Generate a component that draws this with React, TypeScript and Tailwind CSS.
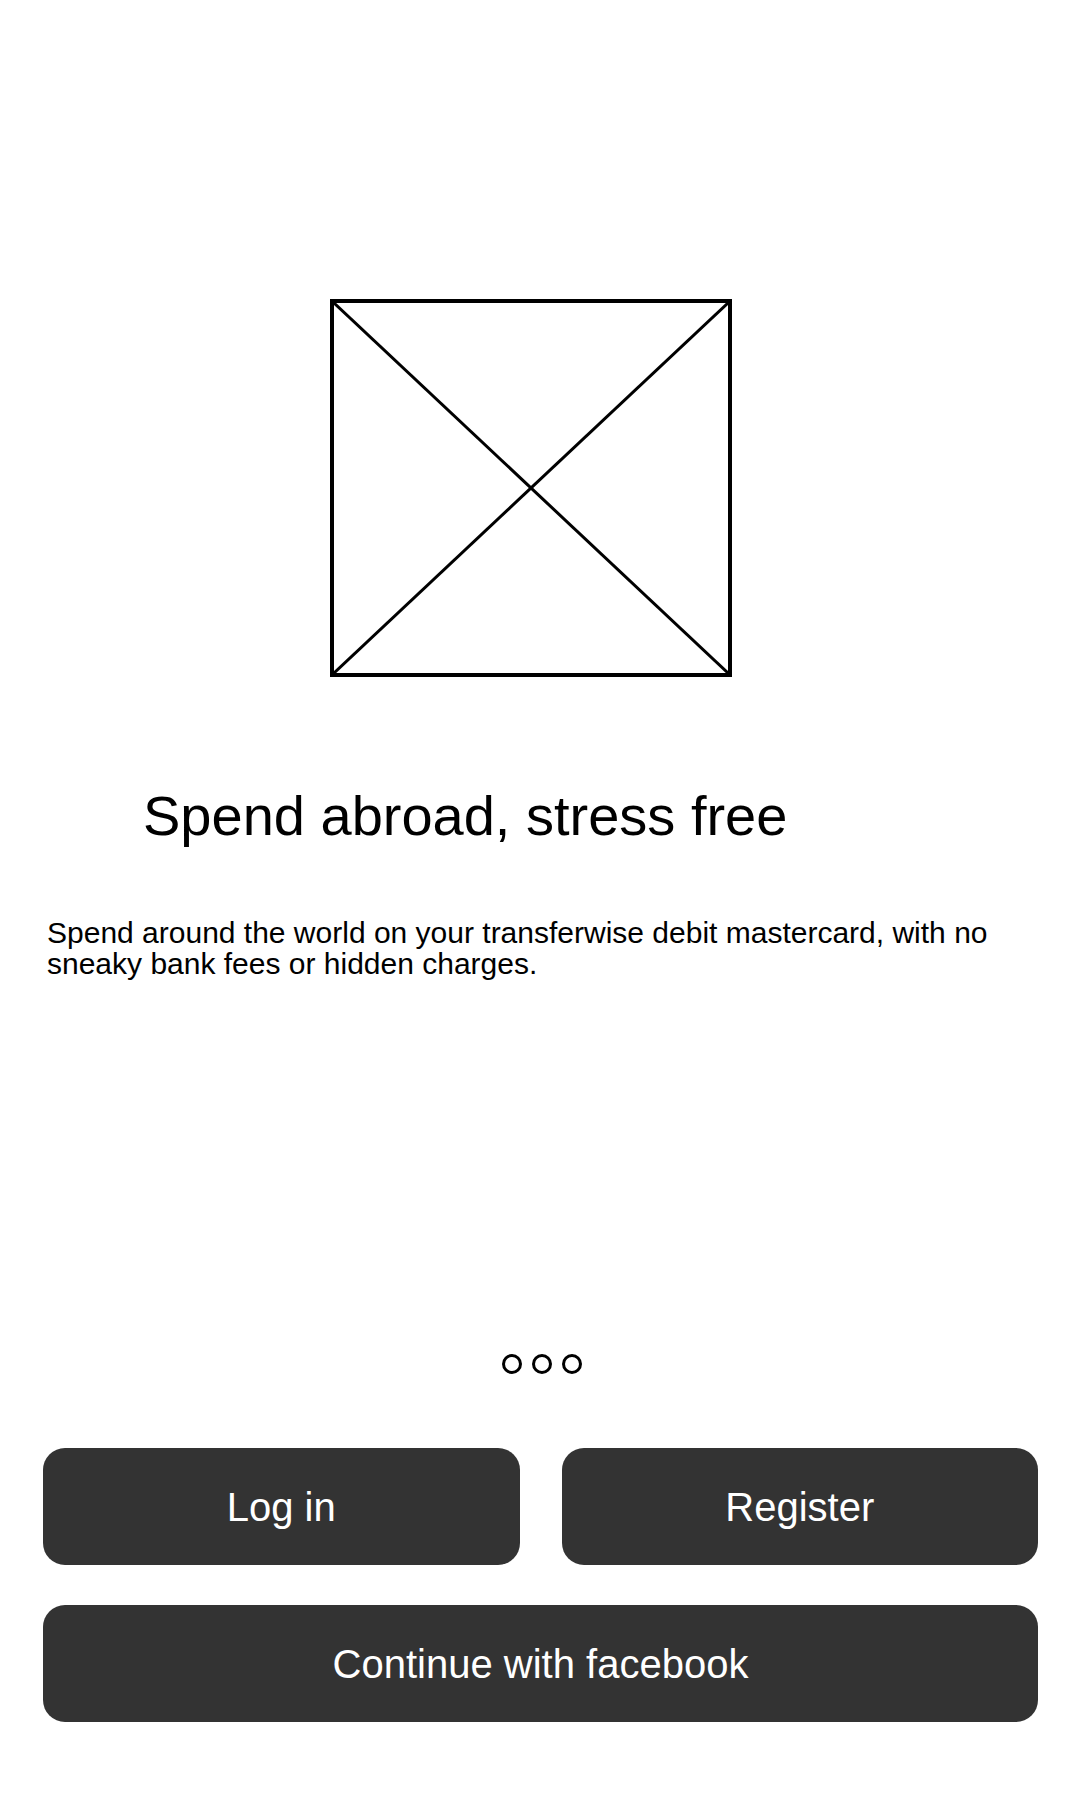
export default function App() {
  return (
    <div className="min-h-[1800px] w-[1080px] bg-white font-['Liberation_Sans',Arial,sans-serif] text-black">
      <div className="flex flex-col">
        {/* image placeholder */}
        <div className="ml-[330px] mt-[299px] h-[378px] w-[402px] border-4 border-black">
          <svg className="block h-full w-full" viewBox="0 0 394 370" preserveAspectRatio="none">
            <line x1="0" y1="0" x2="394" y2="370" stroke="#000" strokeWidth="3" />
            <line x1="394" y1="0" x2="0" y2="370" stroke="#000" strokeWidth="3" />
          </svg>
        </div>

        <h1 className="ml-[143px] mt-[107px] text-[56px] leading-[64px] font-normal">
          Spend abroad, stress free
        </h1>

        <p className="ml-[47px] mt-[69px] w-[995px] text-[30px] leading-[31px]">
          Spend around the world on your transferwise debit mastercard, with no sneaky bank fees or hidden charges.
        </p>

        <div className="mt-[375px] flex justify-center gap-[10px] pl-[3px]">
          <span className="h-[20px] w-[20px] rounded-full border-[3px] border-black" />
          <span className="h-[20px] w-[20px] rounded-full border-[3px] border-black" />
          <span className="h-[20px] w-[20px] rounded-full border-[3px] border-black" />
        </div>

        <div className="mt-[74px] flex flex-col gap-[40px] pl-[43px] pr-[42px]">
          <div className="grid grid-cols-2 gap-[42px]">
            <button className="h-[117px] rounded-[22px] bg-[#333333] text-[40px] text-white">Log in</button>
            <button className="h-[117px] rounded-[22px] bg-[#333333] text-[40px] text-white">Register</button>
          </div>
          <button className="h-[117px] rounded-[22px] bg-[#333333] text-[40px] text-white">
            Continue with facebook
          </button>
        </div>
      </div>
    </div>
  );
}
